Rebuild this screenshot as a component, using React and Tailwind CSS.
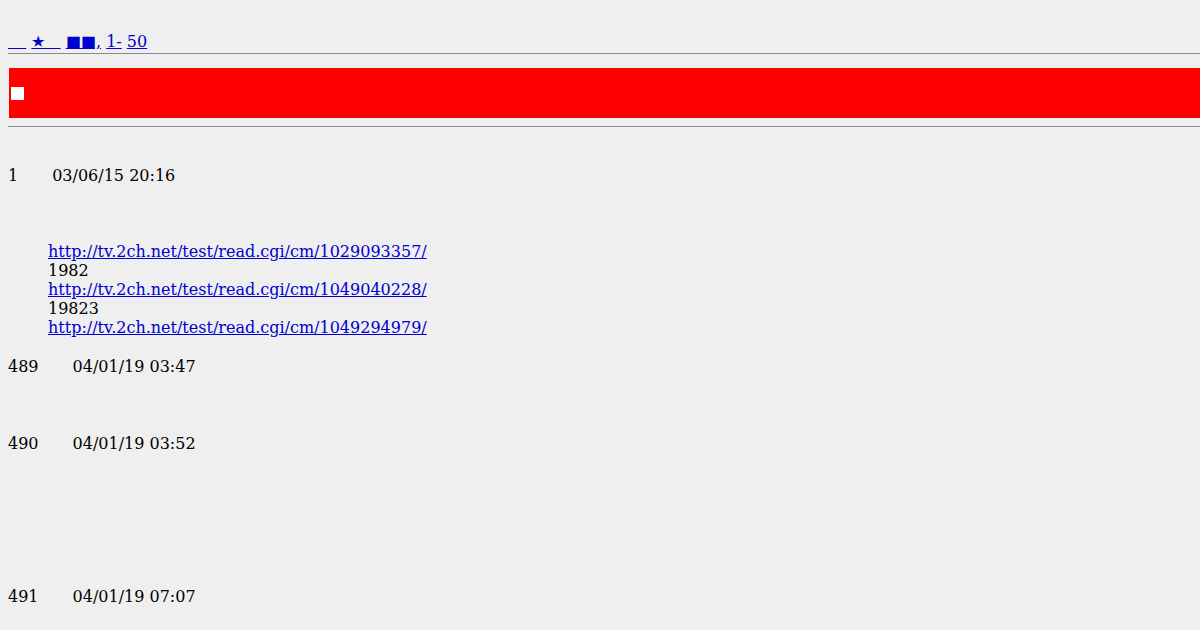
export default function App() {
  const link = "text-[#0000d0] underline whitespace-pre";
  return (
    <div className="min-h-screen overflow-hidden bg-[#efefef] pl-2 pt-[32px] font-['DejaVu_Serif',serif] text-[16px] leading-[19px] text-black">
      <div className="h-[19px] whitespace-pre">
        <a className={link + " tracking-[1px]"}>{"   "}</a>
        <span>{" "}</span>
        <a className={link}>{"★   "}</a>
        <span>{" "}</span>
        <a className={link}>{"■■,"}</a>
        <span>{" "}</span>
        <a className={link}>1-</a>
        <span>{" "}</span>
        <a className={link}>50</a>
      </div>
      <div className="mt-[2px] h-px bg-[#8a8a8a]" />
      <div className="ml-px mt-[14px] flex h-[50px] items-center bg-[#ff0000] pl-[2px]">
        <span className="block h-[13px] w-[13px] bg-white" />
      </div>
      <div className="mt-[8px] h-px bg-[#8a8a8a]" />
      <div className="mt-[39px] flex h-[19px]">
        <span>1</span>
        <span className="ml-[34px]">03/06/15 20:16</span>
      </div>
      <div className="ml-[40px] mt-[57px]">
        <div><a className={link}>http://tv.2ch.net/test/read.cgi/cm/1029093357/</a></div>
        <div>1982</div>
        <div><a className={link}>http://tv.2ch.net/test/read.cgi/cm/1049040228/</a></div>
        <div>19823</div>
        <div><a className={link}>http://tv.2ch.net/test/read.cgi/cm/1049294979/</a></div>
      </div>
      <div className="mt-[20px] flex h-[19px]">
        <span>489</span>
        <span className="ml-[34px]">04/01/19 03:47</span>
      </div>
      <div className="mt-[58px] flex h-[19px]">
        <span>490</span>
        <span className="ml-[34px]">04/01/19 03:52</span>
      </div>
      <div className="mt-[134px] flex h-[19px]">
        <span>491</span>
        <span className="ml-[34px]">04/01/19 07:07</span>
      </div>
    </div>
  );
}
